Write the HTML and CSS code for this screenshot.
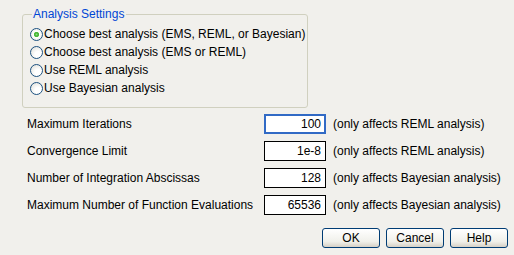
FILE: index.html
```html
<!DOCTYPE html>
<html lang="en">
<head>
    <meta charset="UTF-8">
    <title>Analysis Settings</title>
    <link rel="stylesheet" href="styles.css">
</head>
<body>
    <div class="dialog">
        <fieldset class="group">
            <legend>Analysis Settings</legend>
            <label class="radio"><span class="dot checked"></span>Choose best analysis (EMS, REML, or Bayesian)</label>
            <label class="radio"><span class="dot"></span>Choose best analysis (EMS or REML)</label>
            <label class="radio"><span class="dot"></span>Use REML analysis</label>
            <label class="radio"><span class="dot"></span>Use Bayesian analysis</label>
        </fieldset>

        <div class="fields">
            <span class="label">Maximum Iterations</span>
            <input type="text" class="num focused" value="100">
            <span class="note">(only affects REML analysis)</span>

            <span class="label">Convergence Limit</span>
            <input type="text" class="num" value="1e-8">
            <span class="note">(only affects REML analysis)</span>

            <span class="label">Number of Integration Abscissas</span>
            <input type="text" class="num" value="128">
            <span class="note">(only affects Bayesian analysis)</span>

            <span class="label">Maximum Number of Function Evaluations</span>
            <input type="text" class="num" value="65536">
            <span class="note">(only affects Bayesian analysis)</span>
        </div>

        <div class="buttons">
            <button>OK</button>
            <button>Cancel</button>
            <button>Help</button>
        </div>
    </div>
</body>
</html>
```

FILE: styles.css
```css
html, body {
    margin: 0;
    background: #f1f0ec;
}
body {
    font-family: "Liberation Sans", Arial, sans-serif;
    font-size: 12px;
    color: #000;
}
.dialog {
    width: 514px;
    height: 255px;
    box-sizing: border-box;
    padding: 8px 6px 0 0;
}
.group {
    margin: 0 0 0 22px;
    width: 286px;
    height: 100px;
    box-sizing: border-box;
    padding: 5px 0 0 7px;
    border: 1px solid #d0d0bf;
    border-radius: 3px;
}
.group legend {
    color: #0046d5;
    padding: 0 2px 0 1px;
    margin-left: 2px;
    line-height: 12px;
}
.radio {
    display: flex;
    align-items: center;
    height: 18px;
}
.dot {
    width: 11px;
    height: 11px;
    border: 1px solid #1c5180;
    border-radius: 50%;
    margin-right: 1px;
    background: radial-gradient(circle at 65% 70%, #ffffff 30%, #dcdcd5 100%);
}
.dot.checked {
    background: radial-gradient(circle at 50% 50%, #8fe080 0, #3fb030 22%, #5cc24a 32%, #ffffff 38%, #e4e4dc 100%);
}
.fields {
    display: grid;
    grid-template-columns: 230px 62px auto;
    column-gap: 7px;
    row-gap: 7px;
    align-items: center;
    margin: 6px 0 0 27px;
}
.num {
    width: 62px;
    height: 20px;
    box-sizing: border-box;
    border: 1px solid #000;
    padding: 0 4px;
    text-align: right;
    font: inherit;
    background: #fff;
}
.num.focused {
    border: 2px solid #316ac5;
    padding: 0 3px;
}
.note {
    white-space: nowrap;
}
.buttons {
    display: flex;
    justify-content: flex-end;
    gap: 6px;
    margin-top: 13px;
}
.buttons button {
    width: 58px;
    height: 20px;
    font: inherit;
    padding: 0;
    border: 1px solid #003c74;
    border-radius: 3px;
    background: linear-gradient(#ffffff, #f0f0ea 70%, #d6d0c5);
}
```
